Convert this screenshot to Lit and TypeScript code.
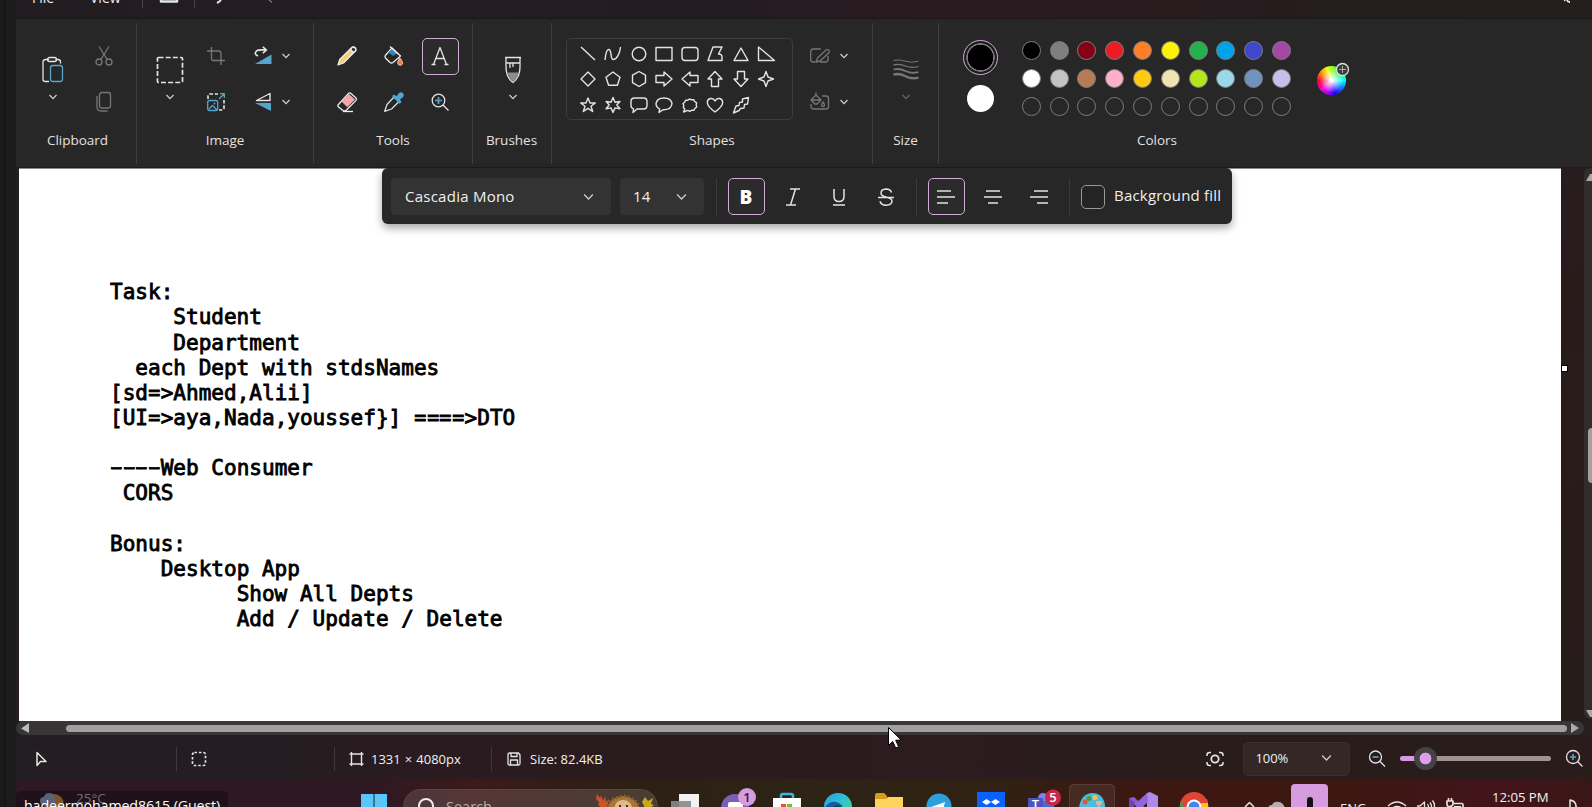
import { LitElement, html, svg, css } from 'lit';
import { customElement } from 'lit/decorators.js';

const chevron = (dim = false) => html`<svg class="chev ${dim ? 'dim' : ''}" width="12" height="8" viewBox="0 0 12 8"><path d="M2.500 2l3.500 3.600L9.500 2" /></svg>`;

const icon = (w: number, h: number, body: unknown, cls = '') =>
  html`<svg class="ic ${cls}" width=${w} height=${h} viewBox="0 0 ${w} ${h}">${body}</svg>`;

const paste = icon(24, 28, svg`
  <path d="M8 3.500H4.500Q2 3.500 2 6v17.500Q2 25.500 4.500 25.500H8M14.500 3.500h2.500q2.500 0 2.500 2.500v1.500" />
  <rect x="6.500" y="1.500" width="9" height="4" rx="2" />
  <rect class="blue" x="9.500" y="9.500" width="12" height="16" rx="2.500" />`);
const scissors = icon(20, 22, svg`<path d="M5 1.500l8.500 13.500M15 1.500L6.500 15" /><circle cx="5" cy="17" r="3" /><circle cx="15" cy="17" r="3" />`, 'off');
const copy = icon(18, 22, svg`<rect x="4.500" y="1.500" width="11" height="15.500" rx="2.500" /><path d="M2 5v11q0 4 4 4h6.500" />`, 'off');
const select = icon(28, 28, svg`<rect x="1.500" y="1.500" width="25" height="25" rx="1" stroke-dasharray="5 2.150" stroke-width="1.700" />`);
const crop = icon(20, 20, svg`<path d="M5.500 1v11.500q0 2 2 2H19M1 5h11.500q2.500 0 2.500 2.500V19" />`, 'off');
const resize = icon(20, 20, svg`
  <path d="M2 7V4q0-2 2-2h8M18 8v8q0 2-2 2h-3" stroke-dasharray="3.500 1.800" stroke-width="1.600" />
  <path class="blue" d="M13 7l5-5M14 1.700h4.300V6" /><rect class="blue" x="1.700" y="8.500" width="10" height="10" rx="2" />
  <path class="blue" d="M3 17l3.500-3.500L11 18" /><circle class="bluefill" cx="8.500" cy="11.500" r=".9" />`);
const rotate = icon(20, 20, svg`<path d="M5 10Q.5 8 3.500 5 5 3.500 13.500 4M9.800 .8l3.700 3.200-3.700 3.200" stroke-width="1.600" /><path class="bluefill" d="M2 18h16.500V8.500z" />`);
const flip = icon(20, 20, svg`<path d="M17 1.500v7H3.500z" stroke-width="1.400" /><path class="bluefill" d="M2 11l16 0v8z" />`);

const pencil = icon(22, 22, svg`<path d="M2 20l1.700-5.500L16 2.200q1.800-1 3.200.5t.4 3.100L7.500 18z" fill="#f0cf7c" stroke="#eee" /><path d="M14.500 4.500l3 3L19.500 6q.8-1.800-.4-3t-3-.7z" fill="#333" stroke="#eee" />`);
const bucket = icon(22, 22, svg`<path d="M9 3l8.500 8L10 17.500q-1.500 1-3 0L2.500 13q-1.200-1.500 0-2.800z" stroke="#eee" /><path d="M5 7.500L9 4l4.500 4.200-3 2.800z" fill="#3d83b8" stroke="none" /><path d="M7 1.500L15 9" stroke="#eee" /><path d="M17 13q-3 4-2.300 5.500.8 1.800 2.500 1.800t2.400-1.700Q20 17 17 13z" fill="#ee7d4c" stroke="#fbc9a8" stroke-width="1" />`);
const eraser = icon(22, 22, svg`<path d="M2 14L12.500 2.500q1.200-1.300 2.500 0L20 7q1 1.200 0 2.400L9.500 20H7.500L2 15.500z" stroke="#eee" /><path d="M5.500 10.500L13 3l6 5.500-7.700 7.700z" fill="#f3a6a3" stroke="none" /><path d="M7 20.500h10" stroke="#eee" />`);
const dropper = icon(22, 22, svg`<path d="M11 6L4 13.500 1.700 20.300 8.500 18 16 10.500z" stroke="#ddd" /><path d="M9 5l2-1.500 2.500 1.800L16 2q2.300-1.500 4 .3t.2 3.700L17 8.500 18.500 11l-1.800 2z" fill="#51a4d3" stroke="none" />`);
const magnify = icon(22, 22, svg`<circle cx="9.500" cy="9.500" r="6.300" /><path d="M14 14l5.500 5.500" /><path class="blue" d="M9.500 6v7M6 9.500h7" stroke-width="1.700" />`);
const brush = icon(20, 28, svg`<path d="M2 1.500h16M3 2v5h14V2M3 7q-.3 9 2 13.500 2 4 5 6 3-2 5-6 2.300-4.500 2-13.500M7 7v5M10 7v4" /><path d="M4.500 16.500h11q-1 6-5.500 9-4.500-3-5.500-9z" fill="#8b8b8b" stroke="none" />`);

const P = (d: string) => svg`<path d=${d} />`;
const shapes = [
  P('M3 3l14 13'), P('M2 16Q3 5 6 5.500C9 6 7 16 10.500 15.500 14 15 17 9 17.500 3'), svg`<circle cx="10" cy="10" r="6.800" />`,
  svg`<rect x="2" y="3.500" width="16" height="13" />`, svg`<rect x="2" y="3.500" width="16" height="13" rx="3" />`,
  P('M8 3h9l-3.500 7q3.500 0 3.500 3v3.500H3z'), P('M10 4l7 12.500H3z'), P('M2.500 3v13.500h16z'),
  P('M10 3l7 7-7 7-7-7z'), P('M10 3l7 5.200-2.600 8H5.600L3 8.200z'), P('M10 2.500l6.500 3.700v7.500L10 17.500l-6.500-3.800V6.200z'),
  P('M2 6.500h8V3l8 7-8 7v-3.500H2z'), P('M18 6.500h-8V3l-8 7 8 7v-3.500h8z'), P('M6.500 17.500v-7.500H3L10 2.500l7 7.500h-3.500v7.500z'),
  P('M6.500 2.500v7.500H3l7 7.500 7-7.500h-3.500V2.500z'), P('M10 2.500l2 5.500 5.500 2-5.500 2-2 5.500L8 12l-5.500-2L8 8z'),
  P('M10 3l2 5h5.300L13 11.200l1.700 5.300L10 13.300l-4.700 3.200L7 11.200 2.700 8H8z'),
  P('M10 2.500l2 4.700 4.900-.7L13.800 10l3.100 3.700-4.900-.8L10 17.500l-2-4.600-4.900.8L6.200 10 3.100 6.500l4.900.7z'),
  P('M5.500 3h9q3.500 0 3.500 3.500v4q0 3.500-3.500 3.500H8l-4 3.500.5-3.700Q2 13 2 10.500v-4Q2 3 5.500 3z'),
  P('M5 17.500l.7-3.500Q2 12 2 8.700 3 3 10 3t8 5.500q-.5 6-8 6.200H9z'),
  P('M3.500 17l1.300-3-1.500-1.500.5-2L3 8.500l1.700-1.300.8-2 2 .2L9.500 4l2 .8 2.200-.2 1 1.900 1.900 1.300-.4 2 .5 2.200-1.700 1.300-1 2-2.200-.1-2 1.100-2-.9z'),
  P('M10 17Q2.500 11.500 2.300 7.500C2.500 3 8 2 10 6c2-4 7.500-3 7.700 1.500Q17.500 11.500 10 17z'),
  P('M11.500 4l6-1.500-1 6.500-3 .5-.5 3.500-3.500.5L8 15.500l-5.500 2.500 2.500-7 3-.5.5-3 3-.5z'),
];
const outline = icon(22, 20, svg`<path d="M12 3H4Q1.700 3 1.700 5.500v8Q1.700 16 4 16h2M19 10v3.500q0 2.500-2.500 2.500H11" /><path d="M7 16l1.500-4L17 4q2-1 3 .3t-.3 2.700L11 15z" />`, 'off');
const fill = icon(22, 20, svg`<path d="M13 4h4q2.500 0 2.500 2.500v8q0 2.500-2.500 2.500H4.500Q2 17 2 14.500V12" /><path d="M2 8l5-5 5 5-4 4H6zM2 8h10M7 3V.5M14 10q-3 4 0 4.500 3-.5 0-4.500z" />`, 'off');
const sizeIcon = icon(28, 24, svg`<path d="M1.500 2.500q6-1.500 12 .7t13 0" stroke-width="1" /><path d="M1.500 7q6-1.500 12 1t13 .5" stroke-width="1.300" /><path d="M1.500 11.500q6-1.500 12 1.500t13 1" stroke-width="1.800" /><path d="M1.500 16.500q6-1.500 12 1.700t13 1.500" stroke-width="2.400" />`, 'off');

const palette = [
  '#000000', '#7f7f7f', '#880015', '#ed1c24', '#ff7f27', '#fff200', '#22b14c', '#00a2e8', '#3f48cc', '#a349a4',
  '#ffffff', '#c3c3c3', '#b97a57', '#ffaec9', '#ffc90e', '#efe4b0', '#b5e61d', '#99d9ea', '#7092be', '#c8bfe7',
  ...Array(10).fill('transparent'),
];

const note: [number, string][] = [
  [0, 'Task:'], [5, 'Student'], [5, 'Department'], [2, 'each Dept with stdsNames'], [0, '[sd=>Ahmed,Alii]'],
  [0, '[UI=>aya,Nada,youssef}] ====>DTO'], [0, ''], [0, '----Web Consumer'], [1, 'CORS'], [0, ''], [0, 'Bonus:'],
  [4, 'Desktop App'], [10, 'Show All Depts'], [10, 'Add / Update / Delete'],
];
const wide = (t: string) => t.split(/([-=])/).map((s) => (s === '-' || s === '=' ? html`<span class=${s === '-' ? 'dash' : 'eq'}>${s}</span>` : s));

const apps = [
  svg`<path d="M20 15h20v16H20z" fill="#f2f2f2" /><path d="M12 22h20v9H12z" fill="#888" fill-opacity=".9" />`,
  svg`<circle cx="25" cy="29" r="14" fill="#7b5fb5" /><rect x="18" y="23" width="15" height="12" rx="2" fill="#fff" /><circle cx="37" cy="18" r="9" fill="#d79be0" /><text x="37" y="22.500" class="badge dark">1</text>`,
  svg`<path d="M20 20v-3q0-2 2-2h8q2 0 2 2v3" stroke="#35b5ea" stroke-width="2.500" fill="none" /><path d="M12 19h28v10H12z" fill="#fff" /><path d="M20 25h5v5h-5z" fill="#e8502e" /><path d="M26 25h5v5h-5z" fill="#7ab92f" />`,
  svg`<circle cx="26" cy="28" r="14" fill="url(#edge)" /><path d="M13 28q8-10 18-1l-6 3z" fill="#165b9e" /><path d="M20 29q4-5 10-1v4H20z" fill="#0e3f5e" />`,
  svg`<path d="M12 16q0-2 2-2h7l3 3v6H12z" fill="#d99c1a" /><path d="M12 20h11l2-2h15v13H12z" fill="#ffd35c" />`,
  svg`<circle cx="25" cy="27" r="12.500" fill="#2d9fdb" /><path d="M17 28l14-5-3 12-4-4z" fill="#fff" />`,
  svg`<path d="M12 13h28v18H12z" fill="#0a61fe" /><path d="M17 23l4.500-3 4.500 3 4.500-3 4.500 3-4.500 3-4.500-3-4.500 3z" fill="#fff" />`,
  svg`<circle cx="27" cy="19" r="5" fill="#7b83eb" /><path d="M19 22h19v8H19z" fill="#5a62c8" /><path d="M12 19h15v12H12z" fill="#4b53bc" /><text x="19.500" y="30" class="badge">T</text><circle cx="37" cy="18.500" r="8" fill="#c8264a" /><text x="37" y="23" class="badge">5</text>`,
  svg`<rect x="2.500" y="5.500" width="45" height="34" rx="4" fill="#fff" fill-opacity=".07" stroke="#fff" stroke-opacity=".12" /><path d="M12 30q1-15 13-16 11 0 13 12v6H12z" fill="#4dbbe0" /><circle cx="18" cy="23" r="2.500" fill="#e2553a" /><circle cx="22" cy="19.500" r="2.500" fill="#4b9b43" /><circle cx="28" cy="18.500" r="2.500" fill="#f6c443" /><path d="M29 22h6v3l-2 1v5h-2v-5l-2-1z" fill="#e8b48c" />`,
  svg`<path d="M11 19l5-1 23 22H28z" fill="#8a5cd0" /><path d="M29 14l3-1 8 4v14H29z" fill="#b08ae8" /><path d="M29 14L17 25l5 5 8-7z" fill="#9465dc" /><path d="M11 19v12h5v-8l6 5" fill="#6d43b5" />`,
  svg`<circle cx="25" cy="27" r="14" fill="#e04436" /><path d="M11.500 22L18 34h-6q-2-6-.5-12z" fill="#2ba24c" /><path d="M38 22q3 6-1 12H27l5-10z" fill="#fbc116" /><path d="M24 20h14l1 4H24z" fill="#e04436" /><circle cx="25" cy="28" r="7.500" fill="#fff" /><circle cx="25" cy="28" r="5.500" fill="#4387f0" />`,
];

@customElement('app-root')
export class AppRoot extends LitElement {
  static styles = css`
    :host { display: flex; width: 1592px; height: 807px; overflow: hidden; position: relative; background: #1c1c1c;
      font: 13.500px/18px "Open Sans", "Noto Sans", sans-serif; color: #e2e2e2; }
    * { box-sizing: border-box; }
    svg { display: block; flex: none; }
    .edge { width: 16px; flex: none; background: linear-gradient(90deg, #1b191b 0 4px, #161416 4px 6px, #1c1c1c 6px); }
    .main { width: 1576px; flex: none; display: flex; flex-direction: column; }
    .ic { fill: none; stroke: #e4e4e4; stroke-width: 1.300; stroke-linecap: butt; stroke-linejoin: round; }
    .ic.off { stroke: #777; }
    .ic .blue { stroke: #55a5cf; }
    .ic .bluefill { fill: #55a5cf; stroke: none; }
    .chev { fill: none; stroke: #cfcfcf; stroke-width: 1.300; }
    .chev.dim { stroke: #666; }

    .title { height: 19px; display: flex; align-items: flex-start; background: linear-gradient(90deg, #231d22, #241c22 45%, #2a1b20 60%, #261c1e 80%, #241f1d); border-bottom: 1px solid #191719; overflow: hidden; }
    .title .menu { margin-top: -11px; color: #eee; height: 18px; font-size: 14px; }
    .title .file { margin-left: 16px; width: 58px; }
    .title .view { width: 52px; }
    .title .sep { width: 1px; height: 8px; background: #444; }

    .ribbon { height: 149px; background: #272727; display: flex; border-bottom: 1px solid #1b1b1b; }
    .group { display: flex; flex-direction: column; position: relative; border-image: linear-gradient(transparent 5px, #3d3d3d 5px 144px, transparent 144px) 1; border-right: 1px solid; flex: none; }
    .group.last { border-right: none; }
    .body { height: 92px; margin-top: 14.400px; display: flex; }
    .label { text-align: center; margin-top: 5.600px; }
    .cell { width: 46px; height: 46px; display: flex; align-items: center; justify-content: center; }
    .big { width: 46px; display: flex; flex-direction: column; align-items: center; padding-top: 22.600px; gap: 9.500px; }
    .split { height: 46px; display: flex; align-items: center; gap: 8px; }
    .clip { width: 121px; } .clip .body { padding-left: 14px; gap: 5px; } .clip .label { padding-left: 3px; }
    .image { width: 177px; } .image .body { padding-left: 10px; } .image .split { padding-left: 14px; gap: 6.500px; }
    .tools { width: 159px; } .tools .body { padding-left: 10px; display: grid; grid-template: repeat(2, 46px) / repeat(3, 46.500px); }
    .on { width: 37px; height: 37px; border: 1.400px solid #d3aad9; border-radius: 5px; background: #2b2b2b; display: flex; align-items: center; justify-content: center; }
    .brushes { width: 79px; } .brushes .body, .size .body { justify-content: center; } .brushes .body { padding-left: 1px; } .brushes .label { padding-right: 1px; }
    .shapes { width: 321px; } .shapes .body { padding-left: 14px; align-items: center; gap: 16px; }
    .shapebox { width: 227px; height: 82px; border: 1px solid #3d3d3d; border-radius: 5px; display: grid; grid-template-columns: repeat(8, 25.500px); grid-auto-rows: 25.300px; padding: 2px 0 0 8px; place-items: center; }
    .shapebox .ic { stroke-width: 1.400; }
    .shapes .split { gap: 7px; }
    .size { width: 66px; } .size .ic { margin: 2px 0; }
    .colors { width: 436px; } .colors .body { padding-left: 24px; }
    .pair { width: 35px; display: flex; flex-direction: column; align-items: center; gap: 10px; padding-top: 6.600px; }
    .primary { width: 35px; height: 35px; border-radius: 50%; border: 1.500px solid #d7a9dc; background: radial-gradient(circle, #000 12.500px, #777 13px 14px, #1b1b1b 14.500px); }
    .secondary { width: 27px; height: 27px; border-radius: 50%; background: #fff; }
    .swatches { margin: 3.600px 21px 0 19.500px; display: grid; grid-template: repeat(3, 28px) / repeat(10, 27.800px); place-items: center; }
    .sw { width: 19px; height: 19px; border-radius: 50%; border: 1px solid #7c7c7c; }
    .wheelbox { width: 34px; height: 40px; margin-top: 27.600px; position: relative; }
    .wheel { width: 29px; height: 29px; margin: 5px 0 0 1px; border-radius: 50%; background: radial-gradient(circle closest-side, #fff 5%, transparent 85%), conic-gradient(from 0deg, #9f2, #2f4 40deg, #0ff 90deg, #08f 120deg, #20f 165deg, #a0f 195deg, #f0c 230deg, #f02 270deg, #f90 310deg, #ef0 340deg, #9f2); }
    .wheelbox svg { position: absolute; right: 0; top: 1px; }

    .stage { height: 553px; display: flex; position: relative; background: linear-gradient(160deg, #221d20, #241f20 40%, #2a1b1b 60%, #261c1a); }
    .canvas { margin-left: 3px; width: 1542px; border-top: 1px solid #8a8a8a; background: #fff; padding: 110.300px 0 0 91px; color: #000; }
    .line { height: 25.150px; line-height: 25.150px; white-space: pre; font-family: "DejaVu Sans Mono", monospace; font-size: 21.040px; -webkit-text-stroke: .85px #000; }
    .dash, .eq { display: inline-block; }
    .dash { transform: scale(1.750, .9); } .eq { transform: scaleX(.95); }
    .handle { position: absolute; left: 1545px; top: 197px; width: 7px; height: 7px; background: #fff; border: 1px solid #000; }
    .vbar { margin-left: auto; width: 8px; margin-bottom: 2px; background: #332c2c; border-radius: 6px 0 0 6px; display: flex; flex-direction: column; align-items: flex-end; justify-content: space-between; padding: 5px 0 1px; }
    .vthumb { width: 4px; height: 55px; margin-top: 19px; border-radius: 4px 0 0 4px; background: #a3a0a0; }

    .format { position: absolute; left: 366px; top: 0; width: 850px; height: 56px; background: #272727; border-radius: 6px; box-shadow: 0 4px 8px rgba(0,0,0,.35); display: flex; align-items: center; padding: 1px 0 0 9px; font-size: 15px; color: #f0f0f0; }
    .field { height: 37px; border-radius: 4px; background: #333; display: flex; align-items: center; justify-content: space-between; padding: 0 15px 2px 14px; letter-spacing: .25px; }
    .field .chev { width: 15px; height: 10px; stroke-width: 1; margin-top: 2px; }
    .font { width: 220px; margin-right: 9px; } .pt { width: 84px; margin-right: 11.500px; padding-left: 13px; }
    .format .sep { width: 1px; height: 37px; background: #3b3b3b; }
    .format .on, .format .btn { width: 37px; height: 37px; margin: 0; flex: none; }
    .btn { display: flex; align-items: center; justify-content: center; }
    .btns { display: flex; gap: 9.500px; margin: 0 11.500px 0 11px; }
    .check { width: 24px; height: 24px; border: 1.300px solid #999; border-radius: 5px; margin: 0 9px 0 11px; background: #242424; }
    .fillt { white-space: nowrap; font-size: 15px; letter-spacing: .2px; margin-bottom: 3px; }
    .bold { font-weight: 800; font-size: 19px; color: #fff; }

    .hbar { width: 1568px; height: 14px; background: #373535; border-radius: 7px; display: flex; align-items: center; padding: 0 5px; justify-content: space-between; }
    .hthumb { width: 1501px; margin-left: 32px; height: 7px; border-radius: 4px; background: #a19f9f; }
    .barwrap { background: linear-gradient(90deg, #1f1c1f, #261c1d 50%, #271f1c); }

    .status { height: 44px; display: flex; align-items: center; background: linear-gradient(90deg, #231e22 0, #241d21 16%, #2a1b20 25%, #2c1b1f 60%, #281d1b 75%, #291c1a); font-size: 13px; color: #f0f0f0; padding-top: 3px; }
    .status .sep { width: 1px; height: 24px; background: #3f393d; flex: none; }
    .s1 { width: 160px; padding-left: 18px; flex: none; } .s2 { width: 156.500px; padding-left: 14px; flex: none; }
    .s3 { width: 156.500px; padding-left: 14px; display: flex; gap: 7.500px; white-space: nowrap; align-items: center; flex: none; word-spacing: .7px; }
    .s4 { width: 713.500px; padding-left: 14px; display: flex; gap: 8px; align-items: center; flex: none; }
    .zoom { width: 107px; height: 34px; margin: 0 17px 0 19px; border-radius: 5px; background: #332826; border: 1px solid #3b302e; display: flex; align-items: center; justify-content: space-between; padding: 0 15px 2px 12px; letter-spacing: -.1px; flex: none; }
    .zoom .chev { width: 15px; height: 10px; stroke-width: 1; }
    .slider { width: 151px; height: 24px; margin: 0 13px 0 13px; display: grid; align-items: center; flex: none; }
    .slider > * { grid-area: 1 / 1; }
    .track { height: 5px; border-radius: 3px; background: linear-gradient(90deg, #d79be0 25px, #a0928f 25px); }
    .knob { width: 23px; height: 23px; margin-left: 14px; border-radius: 50%; background: radial-gradient(circle, #dc9fe8 5.500px, #454246 6.200px); }

    .taskbar { height: 28px; overflow: hidden; display: flex; align-items: flex-start; background: linear-gradient(90deg, #2d1824, #2e1823 22%, #3c1a19 29%, #2d2015 40%, #2d2415 50%, #302113 62%, #3c1812 70%, #3d1712 85%, #42141b 94%, #391716); }
    .weather { width: 344px; display: flex; padding-left: 23px; gap: 11px; color: #e6dfe3; flex: none; }
    .weather span { margin-top: 10px; }
    .search { width: 255px; height: 40px; margin: 10px 0 0 16px; border-radius: 18px; background: rgba(255,255,255,.13); border: 1px solid rgba(255,255,255,.06); display: flex; flex: none; color: #bcaeac; font-size: 14.500px; }
    .search .word { margin: 8px 0 0 6px; width: 149px; }
    .apps { display: flex; margin-left: 1px; width: 561px; flex: none; }
    .badge { font: 600 13px "Open Sans", sans-serif; fill: #fff; text-anchor: middle; }
    .badge.dark { fill: #2d2030; }
    .mic { width: 37px; height: 40px; background: #d79be0; border-radius: 4px; margin: 5px 12px 0 4px; display: flex; justify-content: center; padding-top: 13px; flex: none; }
    .lang { width: 28px; margin: 19.500px 19px 0 0; font-size: 13px; color: #eee; }
    .clock { margin: 9px 16px 0 27px; width: 58px; font-size: 13.200px; letter-spacing: -.05px; color: #f2f2f2; white-space: nowrap; }
    .tray { display: flex; gap: 9px; }

    .guest { position: absolute; left: 16px; top: 791px; width: 212px; height: 30px; border-radius: 5px; background: rgba(18,12,18,.55); color: #fff; font-size: 14.300px; line-height: 18px; padding: 6px 0 0 8px; white-space: nowrap; letter-spacing: -.15px; }
    .pointer { position: absolute; left: 887px; top: 726px; }
  `;

  private group(cls: string, label: string, body: unknown) {
    return html`<section class="group ${cls}"><div class="body">${body}</div><div class="label">${label}</div></section>`;
  }

  render() {
    return html`
      <div class="edge"></div>
      <div class="main">
        <header class="title">
          <span class="menu file">File</span><span class="menu view">View</span>
          <i class="sep"></i>
          ${icon(51, 8, svg`<path d="M18 0v1.500h16V0" stroke-width="2.500" />`)}
          <i class="sep"></i>
          ${icon(90, 8, svg`<path d="M26-1q0 2-4 4" stroke-width="2" /><path d="M73-1l4 3.500" stroke="#777" />`)}
          ${icon(1285, 8, svg`<path d="M1282 0q.5 2 2.500 2t2.500-2" stroke-width="1.800" /><path d="M1279 .5h1.500" />`, 'gear')}
        </header>

        <div class="ribbon">
          ${this.group('clip', 'Clipboard', html`<div class="big">${paste}${chevron()}</div><div><div class="cell">${scissors}</div><div class="cell">${copy}</div></div>`)}
          ${this.group('image', 'Image', html`<div class="big">${select}${chevron()}</div>
            <div><div class="cell">${crop}</div><div class="cell">${resize}</div></div>
            <div><div class="split">${rotate}${chevron()}</div><div class="split">${flip}${chevron()}</div></div>`)}
          ${this.group('tools', 'Tools', html`<div class="cell">${pencil}</div><div class="cell">${bucket}</div>
            <div class="cell"><div class="on">${icon(20, 22, svg`<path d="M3.500 19.500L10 2.500l6.500 17M5.500 13.500h9M1.500 19.500h4M14.500 19.500h4" />`)}</div></div>
            <div class="cell">${eraser}</div><div class="cell">${dropper}</div><div class="cell">${magnify}</div>`)}
          ${this.group('brushes', 'Brushes', html`<div class="big">${brush}${chevron()}</div>`)}
          ${this.group('shapes', 'Shapes', html`<div class="shapebox">${shapes.map((s) => icon(20, 20, s))}</div>
            <div><div class="split">${outline}${chevron()}</div><div class="split">${fill}${chevron()}</div></div>`)}
          ${this.group('size', 'Size', html`<div class="big">${sizeIcon}${chevron(true)}</div>`)}
          ${this.group('colors last', 'Colors', html`
            <div class="pair"><div class="primary"></div><div class="secondary"></div></div>
            <div class="swatches">${palette.map((c) => html`<i class="sw" style="background:${c}"></i>`)}</div>
            <div class="wheelbox"><div class="wheel"></div>
              <svg width="15" height="15" viewBox="0 0 15 15"><circle cx="7.500" cy="7.500" r="6" fill="#3b3b3b" stroke="#ddd" stroke-width="1.300" /><path d="M7.500 4v7M4 7.500h7" stroke="#aaa" /></svg>
            </div>`)}
        </div>

        <div class="stage">
          <div class="canvas">${note.map(([n, t]) => html`<div class="line">${' '.repeat(n)}${wide(t)}</div>`)}</div>
          <i class="handle"></i>
          <div class="vbar">
            <svg width="6" height="8" viewBox="0 0 6 8"><path d="M0 8L4 1h3v7z" fill="#aaa" /></svg>
            <i class="vthumb"></i>
            <svg width="6" height="8" viewBox="0 0 6 8"><path d="M0 0l4 7h3V0z" fill="#aaa" /></svg>
          </div>
          <div class="format">
            <div class="field font"><span>Cascadia Mono</span>${chevron()}</div>
            <div class="field pt"><span>14</span>${chevron()}</div>
            <i class="sep"></i>
            <div class="btns">
              <div class="on bold">B</div>
              <div class="btn">${icon(20, 20, svg`<path d="M7 2h10M3 18h10M12.500 2l-5 16" stroke-width="1.500" />`)}</div>
              <div class="btn">${icon(18, 20, svg`<path d="M4 2v7.500q0 5 5 5t5-5V2M3 18h12" stroke-width="1.500" />`)}</div>
              <div class="btn">${icon(20, 20, svg`<path d="M15.500 5.500Q14.500 2 10 2 5 2.200 5 6q0 3 5 4 6 1.500 6 4 0 4-6 4.200-5-.2-6-4M2 10.500h16" stroke-width="1.500" />`)}</div>
            </div>
            <i class="sep"></i>
            <div class="btns">
              <div class="on">${icon(20, 18, svg`<path d="M1 3h14M1 9h18M1 15h11" stroke-width="1.700" />`)}</div>
              <div class="btn">${icon(20, 18, svg`<path d="M3 3h14M1 9h18M5 15h10" stroke-width="1.700" />`)}</div>
              <div class="btn">${icon(20, 18, svg`<path d="M5 3h14M1 9h18M8 15h11" stroke-width="1.700" />`)}</div>
            </div>
            <i class="sep"></i>
            <i class="check"></i><span class="fillt">Background fill</span>
          </div>
        </div>

        <div class="barwrap"><div class="hbar">
          <svg width="8" height="10" viewBox="0 0 8 10"><path d="M8 0v10L0 5.500z" fill="#bbb" /></svg>
          <i class="hthumb"></i>
          <svg width="8" height="10" viewBox="0 0 8 10"><path d="M0 0v10l8-5z" fill="#aaa" /></svg>
        </div></div>

        <div class="status">
          <div class="s1">${icon(14, 18, svg`<path d="M3 2.500v13l3.500-4h5.500z" stroke-width="1.500" />`)}</div><i class="sep"></i>
          <div class="s2">${icon(16, 16, svg`<rect x="1.500" y="1.500" width="13" height="13" rx="2" stroke-width="1.700" stroke-dasharray="2.500 1.900" />`)}</div><i class="sep"></i>
          <div class="s3">${icon(15, 16, svg`<path d="M2.500 1v14M12.500 1v14M.5 3h14M.5 13h14" stroke-width="1.400" />`)}<span>1331 × 4080px</span></div><i class="sep"></i>
          <div class="s4">${icon(16, 16, svg`<path d="M2 3.500Q2 2 3.500 2h9L14 4v8.500q0 1.500-1.500 1.500h-9Q2 14 2 12.500zM5 2v3.500h6V2M4.500 14V9h7v5" />`)}<span>Size: 82.4KB</span></div>
          ${icon(18, 16, svg`<path d="M1 5V4q0-2.500 2.500-2.500H5M13 1.500h1.500Q17 1.500 17 4v1M17 11v1q0 2.500-2.500 2.500H13M5 14.500H3.500Q1 14.500 1 12v-1" stroke-width="1.500" /><circle cx="9" cy="8" r="3.700" stroke-width="1.800" />`)}
          <div class="zoom"><span>100%</span>${chevron()}</div>
          ${icon(20, 20, svg`<circle cx="8.500" cy="8" r="6" /><path d="M13 12.500l5 5" /><path class="blue" d="M5.500 8h6" stroke-width="1.700" />`)}
          <div class="slider"><i class="track"></i><i class="knob"></i></div>
          ${icon(20, 20, svg`<circle cx="9" cy="8" r="6.500" /><path d="M13.500 12.500l5 5" /><path class="blue" d="M9 5v6M6 8h6" stroke-width="1.600" />`)}
        </div>

        <footer class="taskbar">
          <div class="weather">
            <svg width="26" height="29" viewBox="0 0 26 29"><circle cx="15" cy="25" r="10" fill="#ffab40" /><path d="M1 22q0-4 4-4 1-4 5-4 5 0 6 5l1 3q-1 4-5 4H5q-4 0-4-4z" fill="#b4cbee" /></svg>
            <span>25°C</span>
          </div>
          <svg width="27" height="29" viewBox="0 0 27 29"><path d="M1 15h12.500v14H1zM14.500 15H27v14H14.500z" fill="#58c6fb" /></svg>
          <div class="search">
            <svg width="36" height="30" viewBox="0 0 36 30"><circle cx="22" cy="16" r="7" fill="none" stroke="#eee" stroke-width="2" /></svg>
            <span class="word">Search</span>
            <svg width="62" height="20" viewBox="0 0 62 20">
              <path d="M2 4l3 4 1-3 2 6 2-5 1 6 3-3-2 9H7l-4-3 1-3-3-3z" fill="#c9532a" />
              <path d="M12 20q1-12 16-14 14 1 17 14z" fill="#a8753b" stroke="#8a5b2b" stroke-width="3" stroke-dasharray="2 2" />
              <path d="M19 20q1-10 9-10t10 10z" fill="#dfb98a" /><circle cx="25" cy="16" r="1" /><circle cx="32" cy="16" r="1" />
              <path d="M50 18l-3-6 3-5 3 4 5-3-2 6 3 1-5 4z" fill="#c8a91e" />
            </svg>
          </div>
          <div class="apps">
            ${apps.map((a, i) => html`<svg width="51" height="29" viewBox="0 0 51 29">${i === 3 ? svg`<defs><linearGradient id="edge" x1="0" y1="0" x2="1" y2="1"><stop offset="0" stop-color="#2b9be0" /><stop offset=".45" stop-color="#2fc1d8" /><stop offset="1" stop-color="#5bd65b" /></linearGradient></defs>` : ''}${a}</svg>`)}
          </div>
          ${icon(67, 29, svg`<path d="M25 28l4.500-4.500L34 28" stroke-width="1.500" /><path d="M48 30q0-4 4-4 2-4 7-3 5 1 6 7z" fill="#b5aeae" stroke="none" />`)}
          <div class="mic"><svg width="10" height="16" viewBox="0 0 10 16"><rect x="2" y="0" width="6" height="16" rx="3" fill="#111" /></svg></div>
          <span class="lang">ENG</span>
          <div class="tray">
            ${icon(20, 29, svg`<path d="M1 27q9-8 18 0M4.500 30q5.500-5 11 0" stroke-width="1.600" />`)}
            ${icon(20, 29, svg`<path d="M1 27h3l4.500-4v8M11.500 25q2 3 0 6M14 23.500q3 4 0 8M16.500 21.500q4 5 0 9" stroke-width="1.300" />`)}
            ${icon(20, 29, svg`<path d="M8 24.500h9q1 0 1 2v4M2 22h6v3q0 2-3 2.500t-3-2.500zM3.500 22v-3M6.500 22v-3" stroke-width="1.700" /><path d="M9 27h7v3H9z" fill="#eee" stroke="none" />`)}
          </div>
          <span class="clock">12:05 PM</span>
          ${icon(14, 29, svg`<path d="M4 30V21q6 1 6 6.500l2 3" stroke-width="1.500" />`)}
        </footer>
      </div>
      <div class="guest">hadeermohamed8615 (Guest)</div>
      <svg class="pointer" width="16" height="24" viewBox="0 0 16 24"><path d="M1.500 1.500v18l4.200-4 3 6.500 3-1.300-3-6.400 5.500-.3z" fill="#fff" stroke="#000" /></svg>
    `;
  }
}
